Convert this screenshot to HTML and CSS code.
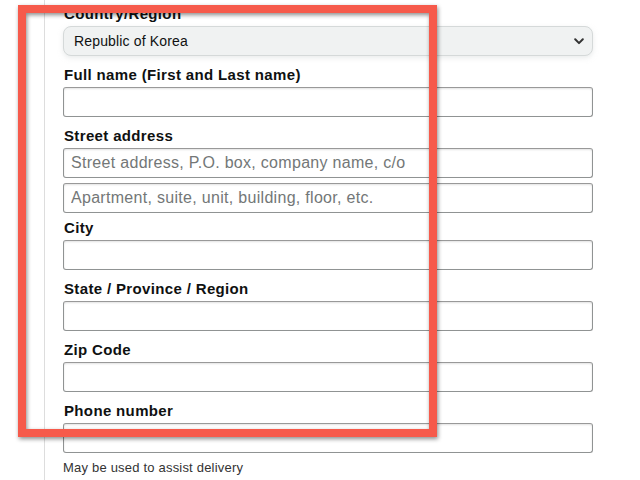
FILE: index.html
```html
<!DOCTYPE html>
<html lang="en">
<head>
<meta charset="utf-8">
<title>Address form</title>
<link rel="stylesheet" href="styles.css">
</head>
<body>
<div class="page">
  <form class="form">
    <div class="field">
      <label class="label">Country/Region</label>
      <div class="select">
        <span class="select-text">Republic of Korea</span>
        <svg class="chev" width="10" height="7" viewBox="0 0 10 7"><path d="M1.2 1.3 L5 5.1 L8.8 1.3" fill="none" stroke="#333" stroke-width="2" stroke-linecap="round" stroke-linejoin="round"/></svg>
      </div>
    </div>
    <div class="field">
      <label class="label">Full name (First and Last name)</label>
      <input class="input" type="text">
    </div>
    <div class="field field-street">
      <label class="label">Street address</label>
      <input class="input" type="text" placeholder="Street address, P.O. box, company name, c/o">
      <input class="input input-second" type="text" placeholder="Apartment, suite, unit, building, floor, etc.">
    </div>
    <div class="field">
      <label class="label">City</label>
      <input class="input" type="text">
    </div>
    <div class="field">
      <label class="label">State / Province / Region</label>
      <input class="input" type="text">
    </div>
    <div class="field">
      <label class="label">Zip Code</label>
      <input class="input" type="text">
    </div>
    <div class="field field-last">
      <label class="label">Phone number</label>
      <input class="input" type="text">
      <div class="hint">May be used to assist delivery</div>
    </div>
  </form>
</div>
<div class="highlight"></div>
</body>
</html>
```
FILE: styles.css
```css
html, body {
  margin: 0;
  padding: 0;
  background: #fff;
  overflow: hidden;
}
body {
  font-family: "Liberation Sans", Arial, sans-serif;
  color: #0f1111;
  width: 640px;
  height: 480px;
  position: relative;
}
.page {
  margin-left: 44px;
  border-left: 1px solid #dddddd;
  height: 480px;
  box-sizing: border-box;
  padding: 5px 0 0 18px;
}
.form {
  width: 530px;
  display: flex;
  flex-direction: column;
}
.field {
  display: flex;
  flex-direction: column;
  margin-bottom: 10px;
}
.field-street {
  margin-bottom: 6px;
}
.label {
  display: block;
  font-size: 15px;
  letter-spacing: 0.35px;
  font-weight: bold;
  line-height: 18px;
  height: 18px;
  margin-bottom: 3px;
  padding-left: 1px;
  color: #0f1111;
  white-space: nowrap;
}
.select {
  box-sizing: border-box;
  height: 30px;
  background: #f0f2f2;
  border: 1px solid #d5d9d9;
  border-radius: 8px;
  box-shadow: 0 2px 5px 0 rgba(213, 217, 217, 0.5);
  display: flex;
  align-items: center;
  justify-content: space-between;
  padding: 0 8px 0 10px;
}
.select-text {
  font-size: 14px;
  letter-spacing: 0.15px;
  color: #0f1111;
}
.chev {
  display: block;
}
.input {
  box-sizing: border-box;
  width: 100%;
  height: 30px;
  margin: 0;
  padding: 0 7px;
  border: 1px solid #909393;
  border-top-color: #999999;
  border-radius: 3px;
  box-shadow: 0 1px 2px rgba(15, 17, 17, 0.12) inset;
  background: #fff;
  font-family: "Liberation Sans", Arial, sans-serif;
  font-size: 16px;
  letter-spacing: 0.3px;
  color: #0f1111;
  outline: none;
}
.input::placeholder {
  color: #737777;
  opacity: 1;
}
.input-second {
  margin-top: 5px;
}
.hint {
  margin-top: 6px;
  font-size: 13px;
  letter-spacing: 0.2px;
  line-height: 17px;
  color: #333;
}
.highlight {
  position: absolute;
  left: 18px;
  top: 5px;
  width: 419px;
  height: 432px;
  box-sizing: border-box;
  border: 8px solid #f65a4b;
  filter: drop-shadow(1px 2px 2px rgba(0, 0, 0, 0.45));
  pointer-events: none;
}
```
